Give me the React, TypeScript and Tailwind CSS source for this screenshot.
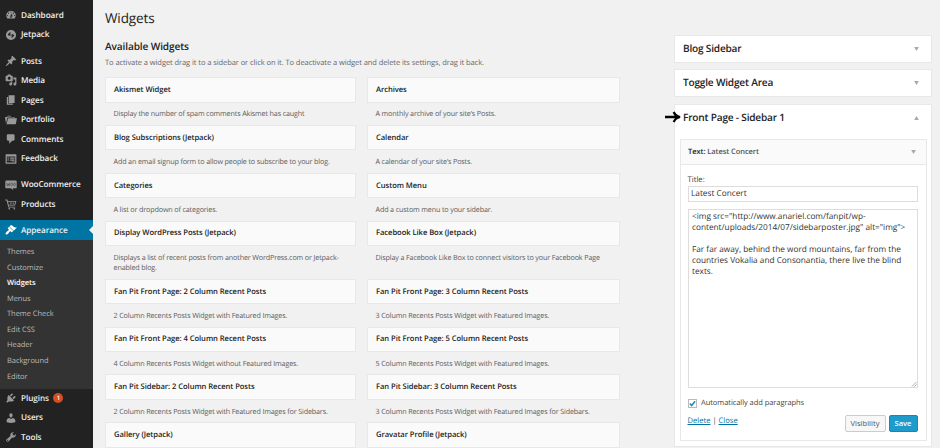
import React from 'react';

const paths: Record<string, string> = {
  dashboard:
    'M3.76 16h12.48A7.998 7.998 0 0 0 10 3a7.998 7.998 0 0 0-6.24 13zM10 4c.55 0 1 .45 1 1s-.45 1-1 1-1-.45-1-1 .45-1 1-1zM6 6c.55 0 1 .45 1 1s-.45 1-1 1-1-.45-1-1 .45-1 1-1zm8 0c.55 0 1 .45 1 1s-.45 1-1 1-1-.45-1-1 .45-1 1-1zm-5.37 5.55L12 7v6c0 1.1-.9 2-2 2s-2-.9-2-2c0-.57.24-1.08.63-1.45zM4 10c.55 0 1 .45 1 1s-.45 1-1 1-1-.45-1-1 .45-1 1-1zm12 0c.55 0 1 .45 1 1s-.45 1-1 1-1-.45-1-1 .45-1 1-1zm-5 3c0-.55-.45-1-1-1s-1 .45-1 1 .45 1 1 1 1-.45 1-1z',
  jetpack:
    'M10 1.5a8.5 8.5 0 1 0 0 17 8.5 8.5 0 0 0 0-17zM9 4.5v7L5.5 10.6c-.9-.3-1-1-.6-1.8zM11 15.5v-7l3.5.9c.9.3 1 1 .6 1.8z',
  posts:
    'M10.44 3.02l1.82-1.82 6.36 6.35-1.83 1.82c-1.05-.68-2.48-.57-3.41.36l-.75.75c-.92.93-1.04 2.35-.35 3.41l-1.83 1.82-2.41-2.41-2.8 2.79c-.42.42-3.38 2.71-3.8 2.29s1.86-3.39 2.28-3.81l2.79-2.79L4.1 9.36l1.83-1.82c1.05.69 2.48.57 3.4-.36l.75-.75c.93-.92 1.05-2.35.36-3.41z',
  media:
    'M13 11V4c0-.55-.45-1-1-1h-1.67L9 1H5L3.67 3H2c-.55 0-1 .45-1 1v7c0 .55.45 1 1 1h10c.55 0 1-.45 1-1zM7 4.5c1.38 0 2.5 1.12 2.5 2.5S8.38 9.5 7 9.5 4.5 8.38 4.5 7 5.62 4.5 7 4.5zM14 6h5v10.5c0 1.38-1.12 2.5-2.5 2.5S14 17.88 14 16.5s1.12-2.5 2.5-2.5c.17 0 .34.02.5.05V9h-3V6zm-4 8.05V13h2v3.5c0 1.38-1.12 2.5-2.5 2.5S7 17.88 7 16.5 8.12 14 9.5 14c.17 0 .34.02.5.05z',
  pages: 'M6 15V2h10v13H6zm-1 1h8v2H3V5h2v11z',
  portfolio:
    'M4 5H.78c-.37 0-.74.32-.69.84l1.56 9.99S3.5 8.47 3.86 6.7c.11-.53.61-.7.98-.7H10s-.7-2.08-.77-2.31C9.11 3.25 8.89 3 8.45 3H5.14c-.36 0-.7.23-.8.64C4.25 4.04 4 5 4 5zm4.88 0h-4s.42-1 .87-1h2.13c.48 0 1 1 1 1zM2.67 16.25c-.31.47-.76.75-1.26.75h15.73c.54 0 .92-.31 1.03-.83.44-2.19 1.68-8.44 1.68-8.44.07-.5-.3-.73-.62-.73H16V5.53c0-.16-.26-.53-.66-.53h-3.76c-.52 0-.87.58-.87.58L10 7H5.59c-.32 0-.63.19-.69.5 0 0-1.59 6.7-1.72 7.33-.07.37-.22.99-.51 1.42zM15.38 7H11s.58-1 1.13-1h2.29c.71 0 .96 1 .96 1z',
  comments: 'M5 2h9c1.1 0 2 .9 2 2v7c0 1.1-.9 2-2 2h-2l-5 5v-5H5c-1.1 0-2-.9-2-2V4c0-1.1.9-2 2-2z',
  feedback:
    'M2 2h16c.55 0 1 .45 1 1v14c0 .55-.45 1-1 1H2c-.55 0-1-.45-1-1V3c0-.55.45-1 1-1zm15 14V6H3v10h14zM4 7.5h3v1.5H4zM8.5 7.5h7.5v2H8.5zM4 11h3v1.5H4zM8.5 11h7.5v2H8.5zM12 14h4v1.2h-4z',
  products:
    'M.5 2.5h3.3L4.7 5H19l-2.2 7.5H6.2l.6 2H17V16H5.6L2.7 4H.5zM5.2 6.4l.8 4.7h9.7l1.4-4.7zM8.2 7h1v3.5h-1zM11 7h1v3.5h-1zM13.6 7h1v3.5h-1zM7 16.5a1.3 1.3 0 1 0 .01 0zM15.5 16.5a1.3 1.3 0 1 0 .01 0z',
  appearance:
    'M14.48 11.06L7.41 3.99l1.5-1.5c.5-.56 2.3-.47 3.51.32 1.21.8 1.43 1.28 2.91 2.1 1.18.64 2.45 1.26 4.45.85zm-.71.71L6.7 4.7 4.93 6.47c-.39.39-.39 1.02 0 1.41l1.06 1.06c.39.39.39 1.03 0 1.42-.6.6-1.43 1.11-2.21 1.69-.35.26-.7.53-1.01.84C1.43 14.23.4 16.08 1.4 17.07c.99 1 2.84-.03 4.18-1.36.31-.31.58-.66.85-1.02.57-.78 1.08-1.61 1.69-2.21.39-.39 1.02-.39 1.41 0l1.06 1.06c.39.39 1.02.39 1.41 0z',
  plugins:
    'M13.11 4.36L9.87 7.6 8 5.73l3.24-3.24c.35-.34 1.05-.2 1.56.32.52.51.66 1.21.31 1.55zm-8 1.77l.91-1.12 9.01 9.01-1.19.84c-.71.71-2.63 1.16-3.82 1.16H6.14L4.9 17.26c-.59.59-1.54.59-2.12 0-.59-.58-.59-1.53 0-2.12l1.24-1.24v-3.88c0-1.13.4-3.19 1.09-3.89zm7.26 3.97l3.24-3.24c.34-.35 1.04-.21 1.55.31.52.51.66 1.21.31 1.55l-3.24 3.25z',
  users:
    'M10 9.25c-2.27 0-2.73-3.44-2.73-3.44C7 4.02 7.82 2 9.97 2c2.16 0 2.98 2.02 2.71 3.81 0 0-.41 3.44-2.68 3.44zm0 2.57L12.72 10c2.39 0 4.52 2.33 4.52 4.53v2.49s-3.65 1.13-7.24 1.13c-3.65 0-7.24-1.13-7.24-1.13v-2.49c0-2.25 1.94-4.48 4.47-4.48z',
  tools:
    'M16.68 9.77c-1.34 1.34-3.3 1.67-4.95.99l-5.41 6.52c-.99.99-2.59.99-3.58 0s-.99-2.59 0-3.57l6.52-5.42c-.68-1.65-.35-3.61.99-4.95 1.28-1.28 3.12-1.62 4.72-1.06l-2.89 2.89 2.82 2.82 2.86-2.87c.53 1.58.18 3.39-1.08 4.65zM3.81 16.21c.4.39 1.04.39 1.43 0 .4-.4.4-1.04 0-1.43-.39-.4-1.03-.4-1.43 0-.39.39-.39 1.03 0 1.43z',
};

function Icon({ name }: { name: string }) {
  if (name === 'woo') {
    return (
      <svg viewBox="0 0 20 20" className="h-3 w-3 shrink-0 overflow-visible">
        <path d="M2 2.5h16a1.5 1.5 0 0 1 1.5 1.5v10a1.5 1.5 0 0 1-1.5 1.5h-5l1 3-4.5-3H2A1.5 1.5 0 0 1 .5 14V4A1.5 1.5 0 0 1 2 2.5z" fill="#999" />
        <path d="M2.8 6.5l1.2 5 1.5-3.5 1.3 3.5 1-5" fill="none" stroke="#444" strokeWidth="1.1" />
        <ellipse cx="11" cy="9" rx="1.5" ry="2.3" fill="none" stroke="#444" strokeWidth="1.1" />
        <ellipse cx="15.8" cy="9" rx="1.5" ry="2.3" fill="none" stroke="#444" strokeWidth="1.1" />
      </svg>
    );
  }
  return (
    <svg
      viewBox="0 0 20 20"
      className={`h-3 w-3 shrink-0 overflow-visible ${name === 'appearance' ? 'fill-white' : 'fill-[#999]'}`}
    >
      <path d={paths[name]} fillRule="evenodd" />
    </svg>
  );
}

function MenuItem({ icon, label, badge }: { icon: string; label: string; badge?: string }) {
  return (
    <a className="flex h-[19.55px] items-center pl-[4.5px] text-[8.2px] font-semibold tracking-[-0.08px] text-[#eee]">
      <Icon name={icon} />
      <span className="ml-[4.5px] pt-[1.6px]">{label}</span>
      {badge && (
        <span className="ml-[4.5px] flex h-[10px] w-[10px] items-center justify-center rounded-full bg-[#d54e21] text-[6px] text-white">
          {badge}
        </span>
      )}
    </a>
  );
}

const submenu = ['Themes', 'Customize', 'Widgets', 'Menus', 'Theme Check', 'Edit CSS', 'Header', 'Background', 'Editor'];

function Sidebar() {
  return (
    <nav className="flex h-full w-[92.5px] shrink-0 flex-col bg-[#222] pt-[5.5px]">
      <MenuItem icon="dashboard" label="Dashboard" />
      <MenuItem icon="jetpack" label="Jetpack" />
      <div className="mt-[6.5px]">
        <MenuItem icon="posts" label="Posts" />
        <MenuItem icon="media" label="Media" />
        <MenuItem icon="pages" label="Pages" />
        <MenuItem icon="portfolio" label="Portfolio" />
        <MenuItem icon="comments" label="Comments" />
        <MenuItem icon="feedback" label="Feedback" />
      </div>
      <div className="mt-[6.5px]">
        <MenuItem icon="woo" label="WooCommerce" />
        <MenuItem icon="products" label="Products" />
      </div>
      <div className="relative mt-[6.5px] bg-[#0074a2]">
        <MenuItem icon="appearance" label="Appearance" />
        <span className="absolute right-0 top-[5.3px] border-y-[4.5px] border-r-[4.5px] border-y-transparent border-r-[#f1f1f1]" />
      </div>
      <div className="h-[148.5px] bg-[#333] pl-[7px] pt-[5px] text-[7.5px] tracking-[-0.05px]">
        {submenu.map((s) => (
          <a
            key={s}
            className={`flex h-[15.55px] items-center ${s === 'Widgets' ? 'font-semibold text-white' : 'text-[#bbb]'}`}
          >
            {s}
          </a>
        ))}
      </div>
      <MenuItem icon="plugins" label="Plugins" badge="1" />
      <MenuItem icon="users" label="Users" />
      <MenuItem icon="tools" label="Tools" />
    </nav>
  );
}

const widgets = [
  ['Akismet Widget', 'Display the number of spam comments Akismet has caught'],
  ['Archives', 'A monthly archive of your site’s Posts.'],
  ['Blog Subscriptions (Jetpack)', 'Add an email signup form to allow people to subscribe to your blog.'],
  ['Calendar', 'A calendar of your site’s Posts.'],
  ['Categories', 'A list or dropdown of categories.'],
  ['Custom Menu', 'Add a custom menu to your sidebar.'],
  ['Display WordPress Posts (Jetpack)', 'Displays a list of recent posts from another WordPress.com or Jetpack-enabled blog.'],
  ['Facebook Like Box (Jetpack)', 'Display a Facebook Like Box to connect visitors to your Facebook Page'],
  ['Fan Pit Front Page: 2 Column Recent Posts', '2 Column Recents Posts Widget with Featured Images.'],
  ['Fan Pit Front Page: 3 Column Recent Posts', '3 Column Recents Posts Widget with Featured Images.'],
  ['Fan Pit Front Page: 4 Column Recent Posts', '4 Column Recents Posts Widget without Featured Images.'],
  ['Fan Pit Front Page: 5 Column Recent Posts', '5 Column Recents Posts Widget with Featured Images.'],
  ['Fan Pit Sidebar: 2 Column Recent Posts', '2 Column Recents Posts Widget with Featured Images for Sidebars.'],
  ['Fan Pit Sidebar: 3 Column Recent Posts', '3 Column Recents Posts Widget with Featured Images for Sidebars.'],
  ['Gallery (Jetpack)', ''],
  ['Gravatar Profile (Jetpack)', ''],
];

function Available() {
  return (
    <section className="w-[515px] shrink-0">
      <h1 className="mt-[9px] text-[13.5px] leading-[18px] tracking-[-0.1px] text-[#222]">Widgets</h1>
      <h2 className="mt-[12.5px] text-[10.1px] font-semibold leading-[13px] tracking-[-0.12px] text-[#222]">Available Widgets</h2>
      <p className="mt-[5.5px] text-[7.5px] leading-[11px] tracking-[-0.07px] text-[#666]">
        To activate a widget drag it to a sidebar or click on it. To deactivate a widget and delete its settings, drag it back.
      </p>
      <div className="mt-[8.2px] grid grid-cols-[251px_253px] gap-x-[11px]">
        {widgets.map(([title, text]) => (
          <article key={title}>
            <h3 className="flex h-[25.5px] items-center border border-[#e8e8e8] bg-[#fafafa] pl-[8px] pt-[1.5px] text-[7.6px] font-semibold tracking-[-0.05px] text-[#222]">
              {title}
            </h3>
            <p className="min-h-[22.3px] pb-[5.2px] pl-[8.5px] pt-[6.6px] text-[7.2px] leading-[10.5px] tracking-[-0.15px] text-[#5c5c5c]">
              {text}
            </p>
          </article>
        ))}
      </div>
    </section>
  );
}

function Caret({ up }: { up?: boolean }) {
  return (
    <svg viewBox="0 0 6 5" className="h-[4px] w-[5px] fill-[#aaa]">
      <path d={up ? 'M0 5h6L3 0z' : 'M0 0h6L3 5z'} />
    </svg>
  );
}

function AreaHead({ title, up }: { title: string; up?: boolean }) {
  return (
    <h3 className="flex h-[26px] items-center justify-between pl-[8px] pr-[12.5px] text-[10.1px] font-semibold tracking-[-0.2px] text-[#222]">
      {title}
      <Caret up={up} />
    </h3>
  );
}

function Areas() {
  return (
    <section className="ml-[54px] flex w-[258px] flex-col gap-[6.5px] pt-[34.5px]">
      <div className="border border-[#e8e8e8] bg-white">
        <AreaHead title="Blog Sidebar" />
      </div>
      <div className="border border-[#e8e8e8] bg-white">
        <AreaHead title="Toggle Widget Area" />
      </div>
      <div className="relative h-[343.5px] border border-[#e8e8e8] bg-white px-[4.5px]">
        <svg viewBox="0 0 16 12" className="absolute -left-[10px] top-[6.5px] h-3 w-4 fill-none stroke-black" strokeWidth="2.3">
          <path d="M0 6h15M8.7 1c1 2.5 3.3 4.3 6.300 5-3 .7-5.300 2.500-6.300 5" />
        </svg>
        <div className="-mx-[4.5px]">
          <AreaHead title="Front Page - Sidebar 1" up />
        </div>
        <div className="mt-[8.5px] h-[302px] border border-[#e8e8e8] text-[#444]">
          <div className="flex h-[25px] items-center justify-between border-b border-[#e8e8e8] bg-[#fafafa] pl-[7.5px] pr-[9.5px] text-[7.5px] tracking-[-0.07px]">
            <p className="pt-[2px] font-semibold">
              <span className="text-[#222]">Text:</span> <span className="text-[#555]">Latest Concert</span>
            </p>
            <Caret />
          </div>
          <div className="pl-[7px] pr-[8px] pt-[10px]">
            <p className="text-[7.7px] leading-[11px]">Title:</p>
            <div className="flex h-[15.5px] items-center border border-[#ddd] pl-[2.5px] text-[8.25px] text-[#333]">
              Latest Concert
            </div>
            <div className="relative mt-[7.5px] h-[179px] border border-[#ddd] px-[3.5px] pt-[2px] text-[8.25px] leading-[10.95px] text-[#333]">
              <p>
                &lt;img src="http://www.anariel.com/fanpit/wp-
                <br />
                content/uploads/2014/07/sidebarposter.jpg" alt="img"&gt;
              </p>
              <p className="mt-[10.95px]">
                Far far away, behind the word mountains, far from the
                <br />
                countries Vokalia and Consonantia, there live the blind
                <br />
                texts.
              </p>
              <svg viewBox="0 0 6 6" className="absolute bottom-0 right-0 h-[6px] w-[6px] stroke-[#888]" strokeWidth=".7">
                <path d="M1 5.5L5.5 1M3.5 5.5l2-2" />
              </svg>
            </div>
            <div className="mt-[10px] flex items-center gap-[4px] text-[7.5px] leading-[11px] tracking-[-0.06px]">
              <span className="flex h-[9.5px] w-[9.5px] items-center justify-center border border-[#bbb] bg-white">
                <svg viewBox="0 0 8 8" className="h-[7px] w-[7px] fill-none stroke-[#1e8cbe]" strokeWidth="1.8">
                  <path d="M1 4l2 2.3L7 1.5" />
                </svg>
              </span>
              Automatically add paragraphs
            </div>
            <div className="mt-[6.5px] flex justify-between text-[7.6px]">
              <p className="leading-[11px]">
                <a className="text-[#0074a2] underline">Delete</a> | <a className="text-[#0074a2] underline">Close</a>
              </p>
              <div className="-mt-px flex gap-[3px]">
                <button className="h-[17px] w-[41px] rounded-[2px] border border-[#ccc] bg-[#f7f7f7] pt-px text-[#555]">Visibility</button>
                <button className="h-[17px] w-[29px] rounded-[2px] border border-[#1b86b5] bg-[#1e9bcb] pt-px font-semibold text-white">Save</button>
              </div>
            </div>
          </div>
        </div>
      </div>
    </section>
  );
}

export default function App() {
  return (
    <div className="flex h-[448px] w-[940px] overflow-hidden bg-[#f1f1f1] font-['Open_Sans',sans-serif] [text-rendering:geometricPrecision]">
      <Sidebar />
      <main className="flex pl-[12.5px]">
        <Available />
        <Areas />
      </main>
    </div>
  );
}
